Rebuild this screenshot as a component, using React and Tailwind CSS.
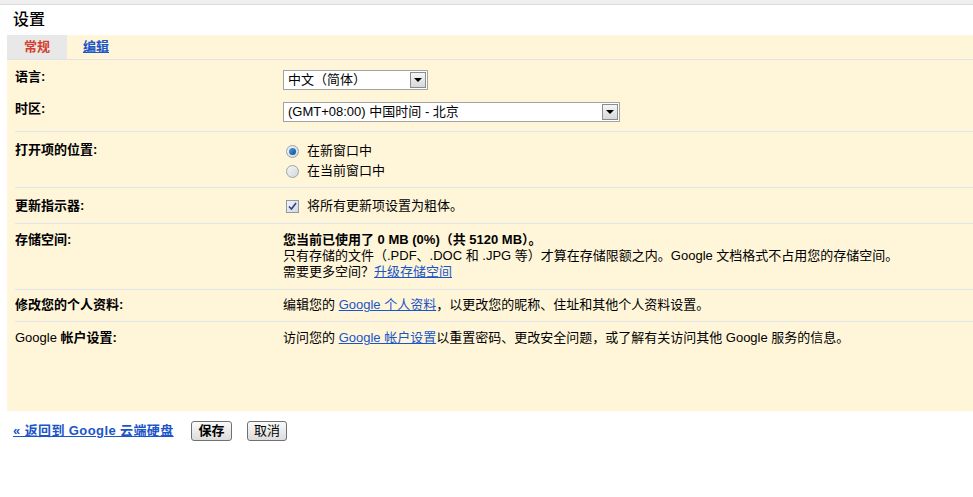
import React from 'react';

const Row = ({ label, className = '', children }) => (
  <div className={`flex border-t border-[#e1e4e8] ml-2 ${className}`}>
    <div className="w-[268px] shrink-0 font-bold">{label}</div>
    <div className="flex-1">{children}</div>
  </div>
);

const Select = ({ value, width }) => (
  <div className={`flex items-center h-[20px] bg-white border border-[#a3a3a3] ${width}`}>
    <span className="flex-1 pl-[4px] text-[13px] leading-[18px] whitespace-nowrap">{value}</span>
    <span className="w-[16px] h-[16px] mr-[1px] flex items-center justify-center border border-[#8c8c8c] bg-gradient-to-b from-[#f6f6f6] to-[#d8d8d8]">
      <span className="block w-0 h-0 border-l-[4px] border-r-[4px] border-t-[4px] border-l-transparent border-r-transparent border-t-black" />
    </span>
  </div>
);

const Radio = ({ checked, label }) => (
  <div className="flex items-center h-[20px] pl-[3px]">
    <span className="w-[13px] h-[13px] rounded-full border border-[#9aa5b0] bg-gradient-to-br from-[#f4f4f4] to-[#d4d8dc] flex items-center justify-center">
      {checked && <span className="w-[7px] h-[7px] rounded-full bg-gradient-to-br from-[#4aa3e8] to-[#0f4c8c]" />}
    </span>
    <span className="ml-[8px]">{label}</span>
  </div>
);

export default function App() {
  return (
    <div className="w-[973px] h-[497px] bg-white text-[13px] leading-[16px] text-black font-['Liberation_Sans','Noto_Sans_CJK_SC',sans-serif]">
      {/* top strip */}
      <div className="h-[4px] bg-[#efefef]" />
      <div className="h-px bg-[#dadada]" />

      {/* title */}
      <div className="h-[30px] pl-[13px] pt-[6px] text-[16px] leading-[18px] font-medium">设置</div>

      {/* settings panel */}
      <div className="ml-[7px] bg-[#fff5d8] h-[376px]">
        {/* tabs */}
        <div className="flex h-[25px] border-b border-[#e2e2e2]">
          <div className="w-[60px] bg-[#e8e8e8] flex items-center justify-center font-bold text-[#d5412e]">常规</div>
          <a href="#" className="ml-[16px] flex items-center font-bold text-[#1a55c9] underline">编辑</a>
        </div>

        {/* language & timezone */}
        <div className="flex ml-2 h-[71px] pt-[9px]">
          <div className="w-[268px] shrink-0 font-bold">
            <div className="h-[16px]">语言:</div>
            <div className="h-[16px] mt-[16px]">时区:</div>
          </div>
          <div className="flex-1 mt-[1px]">
            <Select value="中文（简体）" width="w-[145px]" />
            <div className="mt-[12px]">
              <Select value="(GMT+08:00) 中国时间 - 北京" width="w-[337px]" />
            </div>
          </div>
        </div>

        <Row label="打开项的位置:" className="h-[56px] pt-[10px]">
          <div className="-mt-[1px]">
            <Radio checked label="在新窗口中" />
            <Radio label="在当前窗口中" />
          </div>
        </Row>

        <Row label="更新指示器:" className="h-[36px] pt-[10px]">
          <div className="flex items-center h-[16px] pl-[3px]">
            <span className="w-[13px] h-[13px] border border-[#8e9aa6] bg-gradient-to-br from-[#f2f2f2] to-[#d6dadf] flex items-center justify-center">
              <svg width="9" height="9" viewBox="0 0 9 9">
                <path d="M1 4.5 L3.5 7 L8 1" fill="none" stroke="#2a3f9a" strokeWidth="1.6" />
              </svg>
            </span>
            <span className="ml-[8px]">将所有更新项设置为粗体。</span>
          </div>
        </Row>

        <Row label="存储空间:" className="h-[66px] pt-[8px]">
          <div className="font-bold">您当前已使用了 0 MB (0%)（共 5120 MB）。</div>
          <div>只有存储的文件（.PDF、.DOC 和 .JPG 等）才算在存储限额之内。Google 文档格式不占用您的存储空间。</div>
          <div>
            需要更多空间？<a href="#" className="text-[#1a55c9] underline">升级存储空间</a>
          </div>
        </Row>

        <Row label="修改您的个人资料:" className="h-[32px] pt-[7px]">
          编辑您的 <a href="#" className="text-[#1a55c9] underline">Google 个人资料</a>，以更改您的昵称、住址和其他个人资料设置。
        </Row>

        <Row
          label={<><span className="font-normal">Google</span> 帐户设置:</>}
          className="pt-[8px]"
        >
          访问您的 <a href="#" className="text-[#1a55c9] underline">Google 帐户设置</a>以重置密码、更改安全问题，或了解有关访问其他 Google 服务的信息。
        </Row>
      </div>

      {/* footer */}
      <div className="flex items-center pl-[13px] mt-[10px] h-[20px]">
        <div className="w-[178px] shrink-0 whitespace-nowrap">
          <a href="#" className="font-bold text-[#1a55c9] underline tracking-[0.4px]">« 返回到 Google 云端硬盘</a>
        </div>
        <button className="w-[41px] h-[20px] border border-[#707070] rounded-[3px] bg-gradient-to-b from-[#fafafa] to-[#dcdcdc] font-bold text-[13px] leading-[16px]">保存</button>
        <button className="ml-[15px] w-[40px] h-[20px] border border-[#707070] rounded-[3px] bg-gradient-to-b from-[#fafafa] to-[#dcdcdc] text-[13px] leading-[16px]">取消</button>
      </div>
    </div>
  );
}
